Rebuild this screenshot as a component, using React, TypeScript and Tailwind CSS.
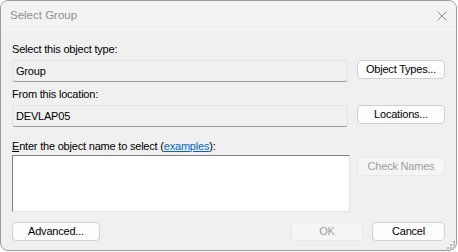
import React from "react";

const font = { fontFamily: '"Liberation Sans", Arial, sans-serif' };

function Btn({ children, disabled }: { children: React.ReactNode; disabled?: boolean }) {
  return (
    <div
      className={`flex items-center justify-center rounded-[4px] border text-[11px] tracking-[-0.2px] ${
        disabled
          ? "bg-[#f5f5f5] border-[#e9e9e9] text-[#9e9e9e]"
          : "bg-[#fdfdfd] border-[#d0d0d0] text-black"
      }`}
    >
      {children}
    </div>
  );
}

export default function App() {
  return (
    <div className="w-[458px] h-[252px] bg-white" style={font}>
      <div className="w-[457px] h-[251px] rounded-[8px] border border-[#9c9c9c] bg-[#f0f0f0] overflow-hidden flex flex-col">
        {/* Title bar */}
        <div className="h-[30px] bg-[#f3f3f3] flex items-center justify-between pl-[9px] pr-[9px] shrink-0">
          <span className="text-[11.5px] text-[#8f8f8f]">Select Group</span>
          <svg width="10" height="10" viewBox="0 0 10 10">
            <path d="M0.5 0.5 L9.5 9.5 M9.5 0.5 L0.5 9.5" stroke="#8c8c8c" strokeWidth="1" />
          </svg>
        </div>

        {/* Body */}
        <div className="flex-1 flex flex-col pl-[11px] pr-[11px] text-[11px] tracking-[-0.2px] text-black relative">
          <div className="mt-[11px] h-[15px] leading-[15px]">Select this object type:</div>
          <div className="mt-[3px] flex gap-[9px] h-[22px]">
            <div className="flex-1 flex items-center pl-[3px] rounded-[3px] border border-[#e3e3e3] border-b-[#9a9a9a] bg-[#f0f0f0]">
              Group
            </div>
            <div className="w-[88px] flex flex-col">
              <Btn>Object Types...</Btn>
            </div>
          </div>

          <div className="mt-[5px] h-[15px] leading-[15px]">From this location:</div>
          <div className="mt-[3px] flex gap-[9px] h-[22px]">
            <div className="flex-1 flex items-center pl-[3px] rounded-[3px] border border-[#e3e3e3] border-b-[#9a9a9a] bg-[#f0f0f0]">
              DEVLAP05
            </div>
            <div className="w-[88px] flex flex-col">
              <Btn>Locations...</Btn>
            </div>
          </div>

          <div className="mt-[12px] h-[15px] leading-[15px]">
            <span className="underline">E</span>nter the object name to select (
            <span className="text-[#0066cc] underline">examples</span>):
          </div>
          <div className="mt-[1px] flex gap-[7px]">
            <div className="flex-1 h-[57px] bg-white border border-[#828282] border-r-[#e3e3e3] border-b-[#e3e3e3]" />
            <div className="w-[88px] pt-[2px] flex flex-col">
              <div className="h-[20px] flex flex-col">
                <Btn disabled>Check Names</Btn>
              </div>
            </div>
          </div>

          <div className="mt-[10px] flex items-center h-[21px]">
            <div className="w-[88px] h-full flex flex-col">
              <Btn>Advanced...</Btn>
            </div>
            <div className="flex-1" />
            <div className="w-[72px] h-full flex flex-col">
              <Btn disabled>OK</Btn>
            </div>
            <div className="w-[9px]" />
            <div className="w-[73px] h-full flex flex-col">
              <Btn>Cancel</Btn>
            </div>
          </div>

          {/* size grip */}
          <svg width="8" height="8" viewBox="0 0 8 8" className="absolute right-[1px] bottom-[1px]">
            {[
              [6, 0],
              [6, 3],
              [3, 3],
              [6, 6],
              [3, 6],
              [0, 6],
            ].map(([x, y], i) => (
              <rect key={i} x={x} y={y} width="2" height="2" fill="#b8b8b8" />
            ))}
          </svg>
        </div>
      </div>
    </div>
  );
}
